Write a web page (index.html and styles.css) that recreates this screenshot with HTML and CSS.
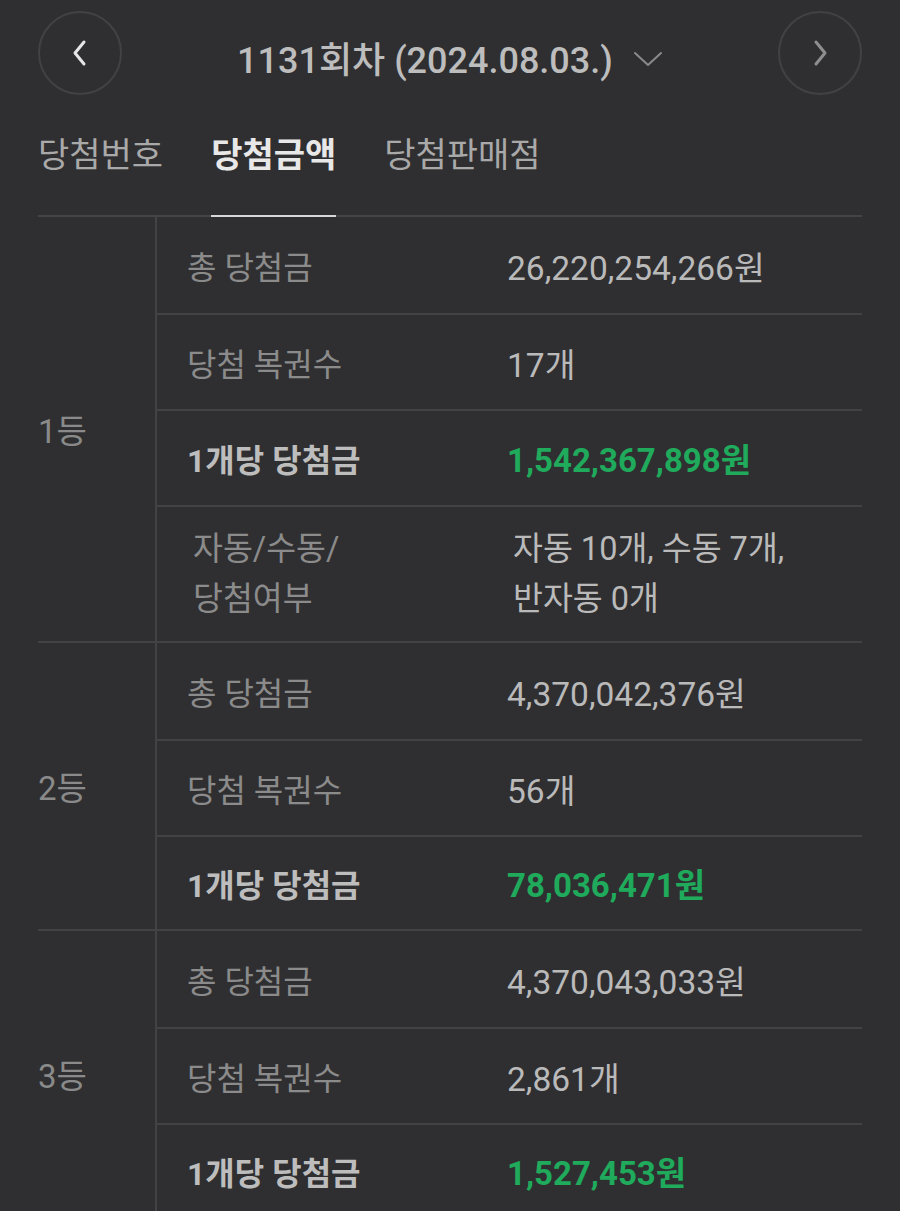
FILE: index.html
```html
<!DOCTYPE html>
<html lang="ko">
	<head>
		<meta charset="UTF-8">
		<title>당첨금액</title>
		<link rel="stylesheet" href="styles.css">
	</head>
	<body>
		<div class="page">
			<div class="draw-head">
				<button class="nav-btn">
					<svg width="20" height="30" viewBox="0 0 20 30"><path d="M14 4 L5 15 L14 26" fill="none" stroke="#e6e6e6" stroke-width="3" stroke-linecap="round" stroke-linejoin="round"/></svg>
				</button>
				<div class="draw-title">
					<span>1131회차 (2024.08.03.)</span>
					<svg width="30" height="20" viewBox="0 0 30 20"><path d="M2 4 L15 16 L28 4" fill="none" stroke="#8a8a8a" stroke-width="2" stroke-linecap="round" stroke-linejoin="round"/></svg>
				</div>
				<button class="nav-btn">
					<svg width="20" height="30" viewBox="0 0 20 30"><path d="M6 4 L15 15 L6 26" fill="none" stroke="#8e8e8e" stroke-width="3" stroke-linecap="round" stroke-linejoin="round"/></svg>
				</button>
			</div>

			<div class="tabs">
				<div class="tab">당첨번호</div>
				<div class="tab on">당첨금액</div>
				<div class="tab">당첨판매점</div>
			</div>

			<div class="prize">
				<div class="rank">1등</div>
				<div class="rows">
					<div class="row"><div class="label">총 당첨금</div><div class="value">26,220,254,266원</div></div>
					<div class="row"><div class="label">당첨 복권수</div><div class="value">17개</div></div>
					<div class="row"><div class="label strong">1개당 당첨금</div><div class="value green">1,542,367,898원</div></div>
					<div class="row tall"><div class="label">자동/수동/<br>당첨여부</div><div class="value">자동 10개, 수동 7개,<br>반자동 0개</div></div>
				</div>
			</div>

			<div class="prize">
				<div class="rank">2등</div>
				<div class="rows">
					<div class="row"><div class="label">총 당첨금</div><div class="value">4,370,042,376원</div></div>
					<div class="row"><div class="label">당첨 복권수</div><div class="value">56개</div></div>
					<div class="row"><div class="label strong">1개당 당첨금</div><div class="value green">78,036,471원</div></div>
				</div>
			</div>

			<div class="prize">
				<div class="rank">3등</div>
				<div class="rows">
					<div class="row"><div class="label">총 당첨금</div><div class="value">4,370,043,033원</div></div>
					<div class="row"><div class="label">당첨 복권수</div><div class="value">2,861개</div></div>
					<div class="row"><div class="label strong">1개당 당첨금</div><div class="value green">1,527,453원</div></div>
				</div>
			</div>
		</div>
	</body>
</html>
```

FILE: styles.css
```css
*{
	margin: 0;
	padding: 0;
	box-sizing: border-box;
}
body{
	background: #2f2f31;
	font-family: Roboto, "Noto Sans CJK KR", sans-serif;
	color: #bcbcbc;
}
.page{
	padding: 11px 38px 0;
}
.draw-head{
	display: flex;
	align-items: center;
	justify-content: space-between;
}
.nav-btn{
	width: 84px;
	height: 84px;
	border-radius: 50%;
	border: 2px solid #424244;
	background: transparent;
	display: flex;
	align-items: center;
	justify-content: center;
}
.draw-title{
	display: flex;
	align-items: center;
	gap: 20px;
	font-size: 36px;
	font-weight: 500;
	color: #bdbdbd;
	padding-top: 8px;
}
.draw-title svg{
	margin-top: 4px;
}
.tabs{
	display: flex;
	gap: 48px;
	border-bottom: 2px solid #444446;
}
.tab{
	font-size: 34px;
	line-height: 44px;
	padding: 38px 0 38px;
	color: #a9a9a9;
	margin-bottom: -2px;
	border-bottom: 2px solid transparent;
}
.tab.on{
	color: #e8e8e8;
	font-weight: 700;
	border-bottom-color: #d8d8d8;
}
.prize{
	display: grid;
	grid-template-columns: 119px 1fr;
	border-bottom: 2px solid #434345;
}
.rank{
	display: flex;
	align-items: center;
	font-size: 33px;
	color: #8a8a8a;
	border-right: 2px solid #434345;
}
.row{
	display: grid;
	grid-template-columns: 320px 1fr;
	height: 96px;
	align-items: center;
}
.row:last-child{
	height: 94px;
}
.row + .row{
	border-top: 2px solid #434345;
}
.row.tall{
	height: 136px;
	line-height: 50px;
}
.label{
	padding-left: 30px;
	font-size: 32px;
	color: #8b8b8b;
}
.label.strong{
	font-weight: 700;
	color: #bdbdbd;
}
.value{
	padding-left: 30px;
	font-size: 33.5px;
	color: #bababa;
}
.row.tall .label,
.row.tall .value{
	padding-left: 36px;
	font-size: 32.5px;
}
.value.green{
	font-weight: 700;
	font-size: 33px;
	color: #1faa5c;
}
```
